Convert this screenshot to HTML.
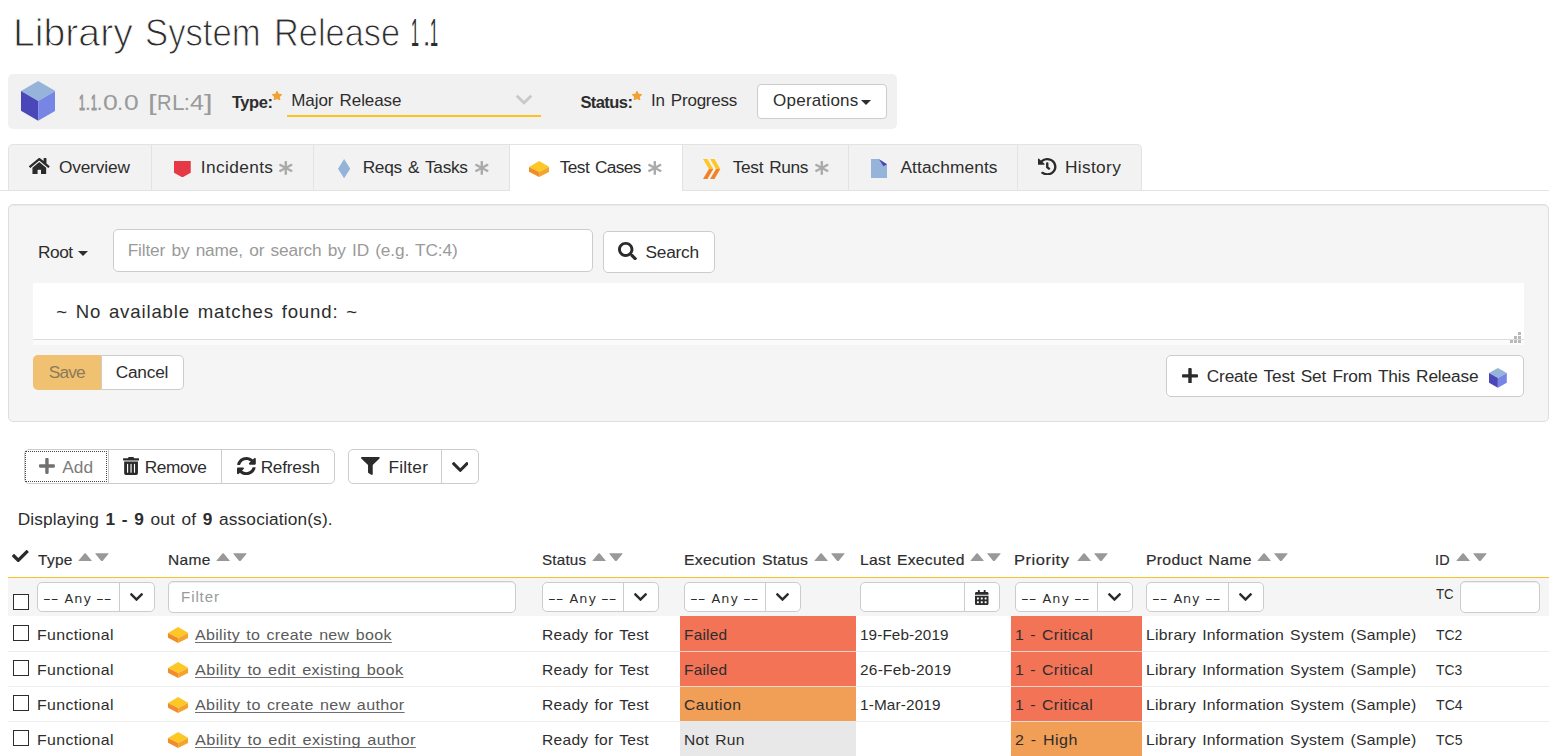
<!DOCTYPE html>
<html lang="en"><head><meta charset="utf-8"><title>Library System Release 1.1</title>
<style>
*{box-sizing:border-box}
html,body{margin:0;padding:0}
body{width:1561px;height:756px;overflow:hidden;background:#fff;font-family:"Liberation Sans",sans-serif;color:#2d2d2d;position:relative}
.bx,.ic,.tx{position:absolute;display:block}
.tx{white-space:pre;margin:0;padding:0;font-weight:normal;color:#2d2d2d;text-decoration:none}
.tx b{font-weight:bold}
.ttl{-webkit-text-stroke:1.0px #fff;color:#262626}
.t1{-webkit-text-stroke:0}
.v1{-webkit-text-stroke:1.2px #9a9a9a}
.ver{}
.dj{font-family:"DejaVu Sans","Liberation Sans",sans-serif}
.tg{position:absolute;display:block;margin:0;padding:0;font-size:0;white-space:nowrap;font-weight:normal}
.ti{display:inline-block;white-space:pre;vertical-align:baseline;color:#2d2d2d;overflow:visible}
</style></head>
<body>
<h1 class="tg" style="left:13.08px;top:9.46px;line-height:47px"><span class="ti ttl" style="width:132.19px;font-size:38.8px;line-height:47px;letter-spacing:0.000px;word-spacing:0px;transform:scaleX(1.0101);transform-origin:0 0;">Library</span> <span class="ti ttl" style="width:128.33px;font-size:38.8px;line-height:47px;letter-spacing:0.000px;word-spacing:0px;transform:scaleX(0.8943);transform-origin:0 0;">System</span> <span class="ti ttl" style="width:137.37px;font-size:38.8px;line-height:47px;letter-spacing:0.000px;word-spacing:0px;transform:scaleX(0.8856);transform-origin:0 0;">Release</span> <span class="ti ttl t1" style="width:10.23px;font-size:38.8px;line-height:47px;letter-spacing:0.000px;word-spacing:0px;transform:scaleX(0.3667);transform-origin:0 0;">1</span><span class="ti ttl" style="width:8.86px;font-size:38.8px;line-height:47px;letter-spacing:0.000px;word-spacing:3.49px;">.</span><span class="ti ttl t1" style="font-size:38.8px;line-height:47px;letter-spacing:0.000px;word-spacing:0px;transform:scaleX(0.3722);transform-origin:0 0;">1</span></h1>
<section class="release-header">
<div class="bx" style="left:8px;top:74px;width:889px;height:55px;background:#f1f1f1;border-radius:5px"></div><svg class="ic" style="left:20.9px;top:81px;width:34.4px;height:39.8px" viewBox="0 0 100 116" preserveAspectRatio="none"><polygon fill="#96b3d9" points="50,0 100,29 50,58 0,29"/><polygon fill="#4a48b8" points="0,29 50,58 50,116 0,87"/><polygon fill="#7786e4" points="100,29 50,58 50,116 100,87"/></svg><svg class="ic" style="left:271.9px;top:90.9px;width:10px;height:9.3px" viewBox="20.50 -0.01 535.00 512.06" preserveAspectRatio="none"><path fill="#f1a332" d="M259.300 17.800L194 150.200 47.900 171.500c-26.200 3.800-36.700 36.100-17.700 54.600l105.700 103-25 145.500c-4.500 26.300 23.200 46 46.400 33.700L288 439.600l130.700 68.700c23.200 12.200 50.900-7.400 46.400-33.700l-25-145.500 105.700-103c19-18.500 8.500-50.800-17.700-54.600L382 150.200 316.700 17.800c-11.700-23.600-45.600-23.900-57.400 0z"/></svg><div class="bx" style="left:287px;top:115px;width:254px;height:2px;background:#fbc31c"></div><svg class="ic" style="left:516px;top:95px;width:16px;height:9.5px" viewBox="5.66 123.49 436.69 265.01" preserveAspectRatio="none"><path fill="#c9c9c9" d="M207.029 381.476L12.686 187.132c-9.373-9.373-9.373-24.569 0-33.941l22.667-22.667c9.357-9.357 24.522-9.375 33.901-.040L224 284.505l154.745-154.021c9.379-9.335 24.544-9.317 33.901.040l22.667 22.667c9.373 9.373 9.373 24.569 0 33.941L240.971 381.476c-9.373 9.372-24.569 9.372-33.942 0z"/></svg><svg class="ic" style="left:631.9px;top:90.9px;width:10px;height:9.3px" viewBox="20.50 -0.01 535.00 512.06" preserveAspectRatio="none"><path fill="#f1a332" d="M259.300 17.800L194 150.200 47.900 171.500c-26.200 3.800-36.700 36.100-17.700 54.600l105.700 103-25 145.500c-4.500 26.300 23.200 46 46.400 33.700L288 439.600l130.700 68.700c23.200 12.200 50.900-7.400 46.400-33.700l-25-145.500 105.700-103c19-18.500 8.500-50.800-17.700-54.600L382 150.200 316.700 17.800c-11.700-23.600-45.600-23.900-57.400 0z"/></svg><div class="bx btn" style="left:757px;top:84px;width:130px;height:35px;background:#fff;border:1px solid #ccc;border-radius:4px"></div><div class="bx" style="left:861px;top:99.5px;width:0px;height:0px;border-left:5px solid transparent;border-right:5px solid transparent;border-top:5px solid #2d2d2d"></div>
<span class="tg version" style="left:78.62px;top:88.71px;line-height:27px"><span class="ti ver v1" style="width:6.18px;font-size:22.2px;line-height:27px;letter-spacing:0.000px;word-spacing:0px;transform:scaleX(0.4818);transform-origin:0 0;color:#9a9a9a">1</span><span class="ti ver" style="width:5.73px;font-size:22.2px;line-height:27px;letter-spacing:0.000px;word-spacing:2.0px;color:#9a9a9a">.</span><span class="ti ver v1" style="width:6.07px;font-size:22.2px;line-height:27px;letter-spacing:0.000px;word-spacing:0px;transform:scaleX(0.4727);transform-origin:0 0;color:#9a9a9a">1</span><span class="ti ver" style="width:6.30px;font-size:22.2px;line-height:27px;letter-spacing:0.000px;word-spacing:2.0px;color:#9a9a9a">.</span><span class="ti ver" style="width:14.10px;font-size:22.2px;line-height:27px;letter-spacing:0.000px;word-spacing:0px;transform:scaleX(1.2000);transform-origin:0 0;color:#9a9a9a">0</span><span class="ti ver" style="width:6.80px;font-size:22.2px;line-height:27px;letter-spacing:0.000px;word-spacing:2.0px;color:#9a9a9a">.</span><span class="ti ver" style="width:23.80px;font-size:22.2px;line-height:27px;letter-spacing:0.000px;word-spacing:0px;transform:scaleX(1.1917);transform-origin:0 0;color:#9a9a9a">0</span> <span class="ti ver" style="width:9.79px;font-size:22.2px;line-height:27px;letter-spacing:0.000px;word-spacing:0px;transform:scaleX(1.4000);transform-origin:0 0;color:#9a9a9a">[</span><span class="ti ver" style="width:14.99px;font-size:22.2px;line-height:27px;letter-spacing:0.000px;word-spacing:0px;transform:scaleX(0.9071);transform-origin:0 0;color:#9a9a9a">R</span><span class="ti ver" style="width:11.52px;font-size:22.2px;line-height:27px;letter-spacing:0.000px;word-spacing:0px;transform:scaleX(1.0182);transform-origin:0 0;color:#9a9a9a">L</span><span class="ti ver" style="width:5.80px;font-size:22.2px;line-height:27px;letter-spacing:0.000px;word-spacing:2.0px;color:#9a9a9a">:</span><span class="ti ver" style="width:14.20px;font-size:22.2px;line-height:27px;letter-spacing:0.000px;word-spacing:0px;transform:scaleX(1.1250);transform-origin:0 0;color:#9a9a9a">4</span><span class="ti ver" style="font-size:22.2px;line-height:27px;letter-spacing:0.000px;word-spacing:0px;transform:scaleX(1.4000);transform-origin:0 0;color:#9a9a9a">]</span></span>
<label class="tx" style="left:231.88px;top:91.78px;font-size:16.5px;line-height:20px;letter-spacing:-0.436px;word-spacing:1.48px;font-weight:bold">Type:</label>
<span class="tx" style="left:291.28px;top:90.61px;font-size:17px;line-height:20px;letter-spacing:-0.076px;word-spacing:1.53px;">Major Release</span>
<label class="tx" style="left:580.42px;top:91.78px;font-size:16.5px;line-height:20px;letter-spacing:-0.571px;word-spacing:1.48px;font-weight:bold">Status:</label>
<span class="tx" style="left:651.12px;top:91.11px;font-size:17px;line-height:20px;letter-spacing:-0.227px;word-spacing:1.53px;">In Progress</span>
<span class="tx" style="left:773.12px;top:91.11px;font-size:17px;line-height:20px;letter-spacing:0.225px;word-spacing:1.53px;">Operations</span>
</section>
<nav class="tabs">
<div class="bx" style="left:0px;top:190px;width:1549px;height:1px;background:#e3e3e3"></div><div class="bx" style="left:8px;top:144px;width:1134px;height:46px;background:#f2f2f2;border:1px solid #e3e3e3;border-bottom:none;border-radius:5px 5px 0 0"></div><div class="bx" style="left:151.2px;top:145px;width:1px;height:45px;background:#e3e3e3"></div><div class="bx" style="left:313.2px;top:145px;width:1px;height:45px;background:#e3e3e3"></div><div class="bx" style="left:848.3px;top:145px;width:1px;height:45px;background:#e3e3e3"></div><div class="bx" style="left:1017.2px;top:145px;width:1px;height:45px;background:#e3e3e3"></div><div class="bx" style="left:508.5px;top:144px;width:174.5px;height:47px;background:#fff;border:1px solid #e3e3e3;border-bottom:none"></div><svg class="ic" style="left:29.2px;top:157.8px;width:20.6px;height:16.4px" viewBox="-0.01 32.05 576.04 447.95" preserveAspectRatio="none"><path fill="#2b2b2b" d="M280.37 148.26L96 300.11V464a16 16 0 0 0 16 16l112.06-.29a16 16 0 0 0 15.92-16V368a16 16 0 0 1 16-16h64a16 16 0 0 1 16 16v95.64a16 16 0 0 0 16 16.05L464 480a16 16 0 0 0 16-16V300L295.67 148.26a12.19 12.19 0 0 0-15.3 0zM571.6 251.47L488 182.56V44.05a12 12 0 0 0-12-12h-56a12 12 0 0 0-12 12v72.61L318.47 43a48 48 0 0 0-61 0L4.34 251.47a12 12 0 0 0-1.6 16.9l25.5 31A12 12 0 0 0 45.15 301l235.22-193.74a12.19 12.19 0 0 1 15.3 0L530.9 301a12 12 0 0 0 16.9-1.6l25.5-31a12 12 0 0 0-1.7-16.93z"/></svg><svg class="ic" style="left:173.75px;top:160.7px;width:16.75px;height:16.4px" viewBox="0 0 16.75 16.4" preserveAspectRatio="none"><polygon fill="#e63946" points="0,0 16.75,0 16.75,11.8 8.4,16.4 0,11.8"/></svg><svg class="ic" style="left:279.2px;top:161px;width:13.6px;height:13.8px" viewBox="21.34 0.00 469.33 512.00" preserveAspectRatio="none"><path fill="#aaa" d="M478.210 334.093L336 256l142.210-78.093c11.795-6.477 15.961-21.384 9.232-33.037l-19.480-33.741c-6.728-11.653-21.720-15.499-33.227-8.523L296 186.718l3.475-162.204C299.763 11.061 288.937 0 275.480 0h-38.960c-13.456 0-24.283 11.061-23.994 24.514L216 186.718 77.265 102.607c-11.506-6.976-26.499-3.130-33.227 8.523l-19.480 33.741c-6.728 11.653-2.562 26.560 9.233 33.037L176 256 33.790 334.093c-11.795 6.477-15.961 21.384-9.232 33.037l19.480 33.741c6.728 11.653 21.721 15.499 33.227 8.523L216 325.282l-3.475 162.204C212.237 500.939 223.064 512 236.520 512h38.961c13.456 0 24.283-11.061 23.995-24.514L296 325.282l138.735 84.111c11.506 6.976 26.499 3.130 33.227-8.523l19.480-33.741c6.728-11.653 2.563-26.559-9.232-33.036z"/></svg><svg class="ic" style="left:338px;top:159.2px;width:12.2px;height:19.3px" viewBox="0 0 12.2 19.3" preserveAspectRatio="none"><polygon fill="#95b3d9" points="6.1,0 12.2,9.65 6.1,19.3 0,9.65"/></svg><svg class="ic" style="left:475px;top:161px;width:13.6px;height:13.8px" viewBox="21.34 0.00 469.33 512.00" preserveAspectRatio="none"><path fill="#aaa" d="M478.210 334.093L336 256l142.210-78.093c11.795-6.477 15.961-21.384 9.232-33.037l-19.480-33.741c-6.728-11.653-21.720-15.499-33.227-8.523L296 186.718l3.475-162.204C299.763 11.061 288.937 0 275.480 0h-38.960c-13.456 0-24.283 11.061-23.994 24.514L216 186.718 77.265 102.607c-11.506-6.976-26.499-3.130-33.227 8.523l-19.480 33.741c-6.728 11.653-2.562 26.560 9.233 33.037L176 256 33.790 334.093c-11.795 6.477-15.961 21.384-9.232 33.037l19.480 33.741c6.728 11.653 21.721 15.499 33.227 8.523L216 325.282l-3.475 162.204C212.237 500.939 223.064 512 236.520 512h38.961c13.456 0 24.283-11.061 23.995-24.514L296 325.282l138.735 84.111c11.506 6.976 26.499 3.130 33.227-8.523l19.480-33.741c6.728-11.653 2.563-26.559-9.232-33.036z"/></svg><svg class="ic" style="left:528.9px;top:161px;width:20.2px;height:16px" viewBox="0 0 20.2 16" preserveAspectRatio="none"><polygon fill="#fdc726" points="10.1,0 20.2,5.9 10.1,11 0,5.9"/><polygon fill="#f28c28" points="0,5.9 10.1,11 10.1,16 0,10.8"/><polygon fill="#f4a42a" points="20.2,5.9 10.1,11 10.1,16 20.2,10.8"/></svg><svg class="ic" style="left:648px;top:161px;width:13.6px;height:13.8px" viewBox="21.34 0.00 469.33 512.00" preserveAspectRatio="none"><path fill="#aaa" d="M478.210 334.093L336 256l142.210-78.093c11.795-6.477 15.961-21.384 9.232-33.037l-19.480-33.741c-6.728-11.653-21.720-15.499-33.227-8.523L296 186.718l3.475-162.204C299.763 11.061 288.937 0 275.480 0h-38.960c-13.456 0-24.283 11.061-23.994 24.514L216 186.718 77.265 102.607c-11.506-6.976-26.499-3.130-33.227 8.523l-19.480 33.741c-6.728 11.653-2.562 26.560 9.233 33.037L176 256 33.790 334.093c-11.795 6.477-15.961 21.384-9.232 33.037l19.480 33.741c6.728 11.653 21.721 15.499 33.227 8.523L216 325.282l-3.475 162.204C212.237 500.939 223.064 512 236.520 512h38.961c13.456 0 24.283-11.061 23.995-24.514L296 325.282l138.735 84.111c11.506 6.976 26.499 3.130 33.227-8.523l19.480-33.741c6.728-11.653 2.563-26.559-9.232-33.036z"/></svg><svg class="ic" style="left:703.4px;top:158.9px;width:17.3px;height:19.9px" viewBox="0 0 17.3 19.9" preserveAspectRatio="none"><polygon fill="#fdc726" points="0,0 4.4,0 10.3,10.1 5.9,10.1"/><polygon fill="#fdc726" points="7.1,0 11.5,0 17.3,10.1 13,10.1"/><polygon fill="#f28228" points="5.9,9.9 10.3,9.9 4.4,19.9 0,19.9"/><polygon fill="#f28228" points="13,9.9 17.3,9.9 11.5,19.9 7.1,19.9"/></svg><svg class="ic" style="left:815px;top:161px;width:13.6px;height:13.8px" viewBox="21.34 0.00 469.33 512.00" preserveAspectRatio="none"><path fill="#aaa" d="M478.210 334.093L336 256l142.210-78.093c11.795-6.477 15.961-21.384 9.232-33.037l-19.480-33.741c-6.728-11.653-21.720-15.499-33.227-8.523L296 186.718l3.475-162.204C299.763 11.061 288.937 0 275.480 0h-38.960c-13.456 0-24.283 11.061-23.994 24.514L216 186.718 77.265 102.607c-11.506-6.976-26.499-3.130-33.227 8.523l-19.480 33.741c-6.728 11.653-2.562 26.560 9.233 33.037L176 256 33.790 334.093c-11.795 6.477-15.961 21.384-9.232 33.037l19.480 33.741c6.728 11.653 21.721 15.499 33.227 8.523L216 325.282l-3.475 162.204C212.237 500.939 223.064 512 236.520 512h38.961c13.456 0 24.283-11.061 23.995-24.514L296 325.282l138.735 84.111c11.506 6.976 26.499 3.130 33.227-8.523l19.480-33.741c6.728-11.653 2.563-26.559-9.232-33.036z"/></svg><svg class="ic" style="left:871px;top:159.2px;width:16.1px;height:19.2px" viewBox="0 0 16.1 19.2" preserveAspectRatio="none"><polygon fill="#96b3d9" points="0,0 8,0 16.1,5.2 16.1,19.2 0,19.2"/><polygon fill="#4845b8" points="8,0.3 16.1,5.2 12.4,7.2"/></svg><svg class="ic" style="left:1038.25px;top:157.5px;width:18.5px;height:17.5px" viewBox="8.00 8.00 496.00 496.00" preserveAspectRatio="none"><path fill="#2b2b2b" d="M504 255.531c.253 136.64-111.18 248.372-247.82 248.468-59.015.042-113.223-20.53-155.822-54.911-11.077-8.94-11.905-25.541-1.839-35.607l11.267-11.267c8.609-8.609 22.353-9.551 31.891-1.984C173.062 425.135 212.781 440 256 440c101.705 0 184-82.311 184-184 0-101.705-82.311-184-184-184-48.814 0-93.149 18.969-126.068 49.932l50.754 50.754c10.08 10.08 2.941 27.314-11.313 27.314H24c-8.837 0-16-7.163-16-16V38.627c0-14.254 17.234-21.393 27.314-11.314l49.372 49.372C129.209 34.136 189.552 8 256 8c136.81 0 247.747 110.78 248 247.531zm-180.912 78.784l9.823-12.63c8.138-10.463 6.253-25.542-4.21-33.679L288 256.349V152c0-13.255-10.745-24-24-24h-16c-13.255 0-24 10.745-24 24v135.651l65.409 50.874c10.463 8.137 25.541 6.253 33.679-4.21z"/></svg>
<span class="tx" style="left:58.89px;top:156.51px;font-size:17.3px;line-height:21px;letter-spacing:-0.148px;word-spacing:1.56px;">Overview</span>
<span class="tx" style="left:200.69px;top:156.51px;font-size:17.3px;line-height:21px;letter-spacing:0.388px;word-spacing:1.56px;">Incidents</span>
<span class="tx" style="left:362.64px;top:156.51px;font-size:17.3px;line-height:21px;letter-spacing:-0.279px;word-spacing:1.56px;">Reqs &amp; Tasks</span>
<span class="tx" style="left:559.80px;top:156.51px;font-size:17.3px;line-height:21px;letter-spacing:-0.595px;word-spacing:1.56px;">Test Cases</span>
<span class="tx" style="left:732.80px;top:156.51px;font-size:17.3px;line-height:21px;letter-spacing:-0.340px;word-spacing:1.56px;">Test Runs</span>
<span class="tx" style="left:900.47px;top:156.51px;font-size:17.3px;line-height:21px;letter-spacing:0.096px;word-spacing:1.56px;">Attachments</span>
<span class="tx" style="left:1065.07px;top:156.51px;font-size:17.3px;line-height:21px;letter-spacing:0.323px;word-spacing:1.56px;">History</span>
</nav>
<section class="assoc-panel">
<div class="bx" style="left:8px;top:204px;width:1541px;height:218px;background:#f5f5f5;border:1px solid #dedede;border-radius:5px;box-shadow:inset 0 1px 1px rgba(0,0,0,.05)"></div><div class="bx" style="left:77.5px;top:250.5px;width:0px;height:0px;border-left:5px solid transparent;border-right:5px solid transparent;border-top:5px solid #2d2d2d"></div><div class="bx" style="left:113px;top:229px;width:480px;height:43px;background:#fff;border:1px solid #ccc;border-radius:5px"></div><div class="bx btn" style="left:603px;top:231px;width:111.8px;height:41.5px;background:#fff;border:1px solid #ccc;border-radius:5px"></div><svg class="ic" style="left:618.1px;top:241.8px;width:19px;height:18.4px" viewBox="0.00 0.00 511.96 512.05" preserveAspectRatio="none"><path fill="#2b2b2b" d="M505 442.7L405.3 343c-4.5-4.5-10.6-7-17-7H372c27.6-35.3 44-79.700 44-128C416 93.100 322.900 0 208 0S0 93.100 0 208s93.100 208 208 208c48.300 0 92.700-16.400 128-44v16.300c0 6.400 2.500 12.500 7 17l99.700 99.700c9.400 9.400 24.600 9.400 33.900 0l28.300-28.300c9.400-9.400 9.400-24.600.1-34zM208 336c-70.700 0-128-57.200-128-128 0-70.700 57.200-128 128-128 70.700 0 128 57.200 128 128 0 70.700-57.200 128-128 128z"/></svg><div class="bx" style="left:33px;top:283px;width:1491px;height:62px;background:#fff"></div><div class="bx" style="left:33px;top:339px;width:1491px;height:1px;background:#dcdcdc"></div><div class="bx" style="left:33px;top:340px;width:1491px;height:5px;background:#fbfbfb"></div><svg class="ic" style="left:1510.2px;top:332.2px;width:11px;height:11px" viewBox="0 0 11 11"><rect x="8" y="0" width="3" height="3" fill="#b9b9b9"/><rect x="4" y="4" width="3" height="3" fill="#b9b9b9"/><rect x="8" y="4" width="3" height="3" fill="#b9b9b9"/><rect x="0" y="8" width="3" height="3" fill="#b9b9b9"/><rect x="4" y="8" width="3" height="3" fill="#b9b9b9"/><rect x="8" y="8" width="3" height="3" fill="#b9b9b9"/></svg><div class="bx" style="left:33px;top:355px;width:68px;height:35px;background:#f0c170;border-radius:5px 0 0 5px"></div><div class="bx btn" style="left:100.5px;top:355px;width:83.5px;height:35px;background:#fff;border:1px solid #ccc;border-radius:0 5px 5px 0"></div><div class="bx btn" style="left:1166px;top:355px;width:358px;height:41.5px;background:#fff;border:1px solid #ccc;border-radius:5px"></div><svg class="ic" style="left:1182px;top:367.5px;width:16px;height:15.8px" viewBox="0.00 32.00 448.00 448.00" preserveAspectRatio="none"><path fill="#2b2b2b" d="M416 208H272V64c0-17.670-14.330-32-32-32h-32c-17.670 0-32 14.330-32 32v144H32c-17.670 0-32 14.330-32 32v32c0 17.670 14.330 32 32 32h144v144c0 17.670 14.330 32 32 32h32c17.670 0 32-14.330 32-32V304h144c17.670 0 32-14.330 32-32v-32c0-17.670-14.330-32-32-32z"/></svg><svg class="ic" style="left:1489.1px;top:368px;width:17.8px;height:19.8px" viewBox="0 0 100 116" preserveAspectRatio="none"><polygon fill="#96b3d9" points="50,0 100,29 50,58 0,29"/><polygon fill="#4a48b8" points="0,29 50,58 50,116 0,87"/><polygon fill="#7786e4" points="100,29 50,58 50,116 100,87"/></svg>
<span class="tx" style="left:38.07px;top:241.51px;font-size:17.3px;line-height:21px;letter-spacing:-0.505px;word-spacing:1.56px;">Root</span>
<span class="tx" style="left:127.64px;top:239.76px;font-size:17.3px;line-height:21px;letter-spacing:-0.136px;word-spacing:1.56px;color:#9a9a9a">Filter by name, or search by ID (e.g. TC:4)</span>
<span class="tx" style="left:645.49px;top:241.51px;font-size:17.3px;line-height:21px;letter-spacing:-0.219px;word-spacing:1.56px;">Search</span>
<span class="tx" style="left:56.33px;top:300.56px;font-size:18.6px;line-height:22px;letter-spacing:0.856px;word-spacing:1.67px;">~ No available matches found: ~</span>
<span class="tx" style="left:48.83px;top:361.51px;font-size:17.3px;line-height:21px;letter-spacing:-0.853px;word-spacing:1.56px;color:#8d7a58">Save</span>
<span class="tx" style="left:115.75px;top:361.51px;font-size:17.3px;line-height:21px;letter-spacing:-0.234px;word-spacing:1.56px;">Cancel</span>
<span class="tx" style="left:1206.76px;top:365.91px;font-size:17.3px;line-height:21px;letter-spacing:-0.165px;word-spacing:1.56px;">Create Test Set From This Release</span>
</section>
<section class="toolbar">
<div class="bx btn" style="left:23.75px;top:449.25px;width:311px;height:34.5px;background:#fff;border:1px solid #ccc;border-radius:5px"></div><div class="bx" style="left:24.6px;top:450.6px;width:82.6px;height:31.4px;border:1px dotted #444;border-radius:1px"></div><div class="bx" style="left:108px;top:450px;width:1px;height:33px;background:#ccc"></div><div class="bx" style="left:221.25px;top:450px;width:1px;height:33px;background:#ccc"></div><svg class="ic" style="left:39.1px;top:458.2px;width:15.9px;height:15.9px" viewBox="0.00 32.00 448.00 448.00" preserveAspectRatio="none"><path fill="#707070" d="M416 208H272V64c0-17.670-14.330-32-32-32h-32c-17.670 0-32 14.330-32 32v144H32c-17.670 0-32 14.330-32 32v32c0 17.670 14.330 32 32 32h144v144c0 17.670 14.330 32 32 32h32c17.670 0 32-14.330 32-32V304h144c17.670 0 32-14.330 32-32v-32c0-17.670-14.330-32-32-32z"/></svg><svg class="ic" style="left:123px;top:457px;width:16.1px;height:18px" viewBox="0.00 -0.00 448.00 512.00" preserveAspectRatio="none"><path fill="#2b2b2b" d="M32 464a48 48 0 0 0 48 48h288a48 48 0 0 0 48-48V128H32zm272-256a16 16 0 0 1 32 0v224a16 16 0 0 1-32 0zm-96 0a16 16 0 0 1 32 0v224a16 16 0 0 1-32 0zm-96 0a16 16 0 0 1 32 0v224a16 16 0 0 1-32 0zM432 32H312l-9.400-18.700A24 24 0 0 0 281.100 0H166.800a23.720 23.720 0 0 0-21.400 13.300L136 32H16A16 16 0 0 0 0 48v32a16 16 0 0 0 16 16h416a16 16 0 0 0 16-16V48a16 16 0 0 0-16-16z"/></svg><svg class="ic" style="left:237px;top:457px;width:18.8px;height:18.2px" viewBox="8.00 8.00 496.00 496.00" preserveAspectRatio="none"><path fill="#2b2b2b" d="M370.72 133.28C339.458 104.008 298.888 87.962 255.848 88c-77.458.068-144.328 53.178-162.791 126.850-1.344 5.363-6.122 9.150-11.651 9.150H24.103c-7.498 0-13.194-6.807-11.807-14.176C33.933 94.924 134.813 8 256 8c66.448 0 126.791 26.136 171.315 68.685L463.030 40.970C478.149 25.851 504 36.559 504 57.941V192c0 13.255-10.745 24-24 24H345.941c-21.382 0-32.090-25.851-16.971-40.971l41.750-41.749zM32 296h134.059c21.382 0 32.090 25.851 16.971 40.971l-41.750 41.750c31.262 29.273 71.835 45.319 114.876 45.280 77.418-.070 144.315-53.144 162.787-126.849 1.344-5.363 6.122-9.150 11.651-9.150h57.304c7.498 0 13.194 6.807 11.807 14.176C478.067 417.076 377.187 504 256 504c-66.448 0-126.791-26.136-171.315-68.685L48.970 471.030C33.851 486.149 8 475.441 8 454.059V320c0-13.255 10.745-24 24-24z"/></svg><div class="bx btn" style="left:348.25px;top:449.25px;width:130.5px;height:34.5px;background:#fff;border:1px solid #ccc;border-radius:5px"></div><div class="bx" style="left:441.25px;top:450px;width:1px;height:33px;background:#ccc"></div><svg class="ic" style="left:361.25px;top:457px;width:18.75px;height:18px" viewBox="0.00 0.00 512.00 512.00" preserveAspectRatio="none"><path fill="#2b2b2b" d="M487.976 0H24.028C2.710 0-8.047 25.866 7.058 40.971L192 225.941V432c0 7.831 3.821 15.170 10.237 19.662l80 55.980C298.020 518.690 320 507.493 320 487.980V225.941l184.947-184.970C520.021 25.896 509.338 0 487.976 0z"/></svg><svg class="ic" style="left:451.7px;top:462px;width:16.6px;height:10.1px" viewBox="5.66 123.49 436.69 265.01" preserveAspectRatio="none"><path fill="#2b2b2b" d="M207.029 381.476L12.686 187.132c-9.373-9.373-9.373-24.569 0-33.941l22.667-22.667c9.357-9.357 24.522-9.375 33.901-.040L224 284.505l154.745-154.021c9.379-9.335 24.544-9.317 33.901.040l22.667 22.667c9.373 9.373 9.373 24.569 0 33.941L240.971 381.476c-9.373 9.372-24.569 9.372-33.942 0z"/></svg>
<span class="tx" style="left:62.33px;top:456.51px;font-size:17.3px;line-height:21px;letter-spacing:-0.042px;word-spacing:1.56px;color:#7c7c7c">Add</span>
<span class="tx" style="left:144.64px;top:456.51px;font-size:17.3px;line-height:21px;letter-spacing:-0.404px;word-spacing:1.56px;">Remove</span>
<span class="tx" style="left:260.64px;top:456.51px;font-size:17.3px;line-height:21px;letter-spacing:-0.230px;word-spacing:1.56px;">Refresh</span>
<span class="tx" style="left:388.40px;top:456.51px;font-size:17.3px;line-height:21px;letter-spacing:0.233px;word-spacing:1.56px;">Filter</span>
<span class="tx" style="left:17.64px;top:508.51px;font-size:17.3px;line-height:21px;letter-spacing:0.156px;word-spacing:1.56px;">Displaying <b>1 - 9</b> out of <b>9</b> association(s).</span>
</section>
<section class="grid">
<svg class="ic" style="left:12.2px;top:549.8px;width:16.7px;height:12.3px" viewBox="0.00 65.10 512.00 381.80" preserveAspectRatio="none"><path fill="#2b2b2b" d="M173.898 439.404l-166.400-166.400c-9.997-9.997-9.997-26.206 0-36.204l36.203-36.204c9.997-9.998 26.207-9.998 36.204 0L192 312.690 432.095 72.596c9.997-9.997 26.207-9.997 36.204 0l36.203 36.204c9.997 9.997 9.997 26.206 0 36.204l-294.400 294.401c-9.998 9.997-26.207 9.997-36.204-.001z"/></svg><svg class="ic" style="left:78.0px;top:552.7px;width:31px;height:8.5px" viewBox="0 0 31 8.5"><path fill="#999" d="M0.9 8.2 Q0 8.2 0.6 7.4 L6.4 0.6 Q7.1 -0.1 7.8 0.6 L13.6 7.4 Q14.2 8.2 13.3 8.2 Z"/><path fill="#999" d="M17.8 0.2 Q16.9 0.2 17.5 1 L23.2 7.9 Q23.9 8.6 24.6 7.9 L30.4 1 Q31 0.2 30.1 0.2 Z"/></svg><svg class="ic" style="left:216.25px;top:552.7px;width:31px;height:8.5px" viewBox="0 0 31 8.5"><path fill="#999" d="M0.9 8.2 Q0 8.2 0.6 7.4 L6.4 0.6 Q7.1 -0.1 7.8 0.6 L13.6 7.4 Q14.2 8.2 13.3 8.2 Z"/><path fill="#999" d="M17.8 0.2 Q16.9 0.2 17.5 1 L23.2 7.9 Q23.9 8.6 24.6 7.9 L30.4 1 Q31 0.2 30.1 0.2 Z"/></svg><svg class="ic" style="left:592.25px;top:552.7px;width:31px;height:8.5px" viewBox="0 0 31 8.5"><path fill="#999" d="M0.9 8.2 Q0 8.2 0.6 7.4 L6.4 0.6 Q7.1 -0.1 7.8 0.6 L13.6 7.4 Q14.2 8.2 13.3 8.2 Z"/><path fill="#999" d="M17.8 0.2 Q16.9 0.2 17.5 1 L23.2 7.9 Q23.9 8.6 24.6 7.9 L30.4 1 Q31 0.2 30.1 0.2 Z"/></svg><svg class="ic" style="left:813.75px;top:552.7px;width:31px;height:8.5px" viewBox="0 0 31 8.5"><path fill="#999" d="M0.9 8.2 Q0 8.2 0.6 7.4 L6.4 0.6 Q7.1 -0.1 7.8 0.6 L13.6 7.4 Q14.2 8.2 13.3 8.2 Z"/><path fill="#999" d="M17.8 0.2 Q16.9 0.2 17.5 1 L23.2 7.9 Q23.9 8.6 24.6 7.9 L30.4 1 Q31 0.2 30.1 0.2 Z"/></svg><svg class="ic" style="left:969.75px;top:552.7px;width:31px;height:8.5px" viewBox="0 0 31 8.5"><path fill="#999" d="M0.9 8.2 Q0 8.2 0.6 7.4 L6.4 0.6 Q7.1 -0.1 7.8 0.6 L13.6 7.4 Q14.2 8.2 13.3 8.2 Z"/><path fill="#999" d="M17.8 0.2 Q16.9 0.2 17.5 1 L23.2 7.9 Q23.9 8.6 24.6 7.9 L30.4 1 Q31 0.2 30.1 0.2 Z"/></svg><svg class="ic" style="left:1077.25px;top:552.7px;width:31px;height:8.5px" viewBox="0 0 31 8.5"><path fill="#999" d="M0.9 8.2 Q0 8.2 0.6 7.4 L6.4 0.6 Q7.1 -0.1 7.8 0.6 L13.6 7.4 Q14.2 8.2 13.3 8.2 Z"/><path fill="#999" d="M17.8 0.2 Q16.9 0.2 17.5 1 L23.2 7.9 Q23.9 8.6 24.6 7.9 L30.4 1 Q31 0.2 30.1 0.2 Z"/></svg><svg class="ic" style="left:1256.75px;top:552.7px;width:31px;height:8.5px" viewBox="0 0 31 8.5"><path fill="#999" d="M0.9 8.2 Q0 8.2 0.6 7.4 L6.4 0.6 Q7.1 -0.1 7.8 0.6 L13.6 7.4 Q14.2 8.2 13.3 8.2 Z"/><path fill="#999" d="M17.8 0.2 Q16.9 0.2 17.5 1 L23.2 7.9 Q23.9 8.6 24.6 7.9 L30.4 1 Q31 0.2 30.1 0.2 Z"/></svg><svg class="ic" style="left:1455.95px;top:552.7px;width:31px;height:8.5px" viewBox="0 0 31 8.5"><path fill="#999" d="M0.9 8.2 Q0 8.2 0.6 7.4 L6.4 0.6 Q7.1 -0.1 7.8 0.6 L13.6 7.4 Q14.2 8.2 13.3 8.2 Z"/><path fill="#999" d="M17.8 0.2 Q16.9 0.2 17.5 1 L23.2 7.9 Q23.9 8.6 24.6 7.9 L30.4 1 Q31 0.2 30.1 0.2 Z"/></svg><div class="bx" style="left:8px;top:576.8px;width:1541px;height:1.1px;background:#f9c224"></div><div class="bx" style="left:8px;top:577.9px;width:1541px;height:37.9px;background:#f5f5f5"></div><div class="bx cb" style="left:13px;top:594px;width:16px;height:16px;background:#fff;border:1.25px solid #2d2d2d"></div><div class="bx sel" style="left:37.0px;top:582px;width:117.5px;height:30px;background:#fff;border:1px solid #ccc;border-radius:5px"></div><div class="bx" style="left:119px;top:583px;width:1px;height:28px;background:#ccc"></div><svg class="ic" style="left:130.0px;top:593.2px;width:13px;height:8px" viewBox="5.66 123.49 436.69 265.01" preserveAspectRatio="none"><path fill="#2b2b2b" d="M207.029 381.476L12.686 187.132c-9.373-9.373-9.373-24.569 0-33.941l22.667-22.667c9.357-9.357 24.522-9.375 33.901-.040L224 284.505l154.745-154.021c9.379-9.335 24.544-9.317 33.901.040l22.667 22.667c9.373 9.373 9.373 24.569 0 33.941L240.971 381.476c-9.373 9.372-24.569 9.372-33.942 0z"/></svg><div class="bx" style="left:168.25px;top:581.25px;width:347.5px;height:31.25px;background:#fff;border:1px solid #ccc;border-radius:5px;box-shadow:inset 0 1px 1px rgba(0,0,0,.075)"></div><div class="bx sel" style="left:542.0px;top:582px;width:116.75px;height:30px;background:#fff;border:1px solid #ccc;border-radius:5px"></div><div class="bx" style="left:623px;top:583px;width:1px;height:28px;background:#ccc"></div><svg class="ic" style="left:634.25px;top:593.2px;width:13px;height:8px" viewBox="5.66 123.49 436.69 265.01" preserveAspectRatio="none"><path fill="#2b2b2b" d="M207.029 381.476L12.686 187.132c-9.373-9.373-9.373-24.569 0-33.941l22.667-22.667c9.357-9.357 24.522-9.375 33.901-.040L224 284.505l154.745-154.021c9.379-9.335 24.544-9.317 33.901.040l22.667 22.667c9.373 9.373 9.373 24.569 0 33.941L240.971 381.476c-9.373 9.372-24.569 9.372-33.942 0z"/></svg><div class="bx sel" style="left:684.0px;top:582px;width:116.75px;height:30px;background:#fff;border:1px solid #ccc;border-radius:5px"></div><div class="bx" style="left:765px;top:583px;width:1px;height:28px;background:#ccc"></div><svg class="ic" style="left:775.75px;top:593.2px;width:13px;height:8px" viewBox="5.66 123.49 436.69 265.01" preserveAspectRatio="none"><path fill="#2b2b2b" d="M207.029 381.476L12.686 187.132c-9.373-9.373-9.373-24.569 0-33.941l22.667-22.667c9.357-9.357 24.522-9.375 33.901-.040L224 284.505l154.745-154.021c9.379-9.335 24.544-9.317 33.901.040l22.667 22.667c9.373 9.373 9.373 24.569 0 33.941L240.971 381.476c-9.373 9.372-24.569 9.372-33.942 0z"/></svg><div class="bx" style="left:860px;top:582px;width:140px;height:30px;background:#fff;border:1px solid #ccc;border-radius:5px"></div><div class="bx" style="left:964px;top:583px;width:1px;height:28px;background:#ccc"></div><svg class="ic" style="left:975px;top:589.8px;width:13.5px;height:15.1px" viewBox="0.00 0.00 448.00 512.00" preserveAspectRatio="none"><path fill="#2b2b2b" d="M0 464c0 26.500 21.500 48 48 48h352c26.500 0 48-21.500 48-48V192H0v272zm320-196c0-6.600 5.400-12 12-12h40c6.600 0 12 5.400 12 12v40c0 6.600-5.400 12-12 12h-40c-6.600 0-12-5.400-12-12v-40zm0 128c0-6.600 5.400-12 12-12h40c6.600 0 12 5.400 12 12v40c0 6.600-5.400 12-12 12h-40c-6.600 0-12-5.400-12-12v-40zM192 268c0-6.600 5.400-12 12-12h40c6.600 0 12 5.400 12 12v40c0 6.600-5.400 12-12 12h-40c-6.600 0-12-5.400-12-12v-40zm0 128c0-6.600 5.400-12 12-12h40c6.600 0 12 5.400 12 12v40c0 6.600-5.400 12-12 12h-40c-6.600 0-12-5.400-12-12v-40zM64 268c0-6.600 5.400-12 12-12h40c6.600 0 12 5.400 12 12v40c0 6.600-5.400 12-12 12H76c-6.600 0-12-5.400-12-12v-40zm0 128c0-6.600 5.400-12 12-12h40c6.600 0 12 5.400 12 12v40c0 6.600-5.400 12-12 12H76c-6.600 0-12-5.400-12-12v-40zM400 64h-48V16c0-8.800-7.200-16-16-16h-32c-8.800 0-16 7.200-16 16v48H160V16c0-8.800-7.200-16-16-16h-32c-8.800 0-16 7.200-16 16v48H48C21.500 64 0 85.500 0 112v48h448v-48c0-26.500-21.500-48-48-48z"/></svg><div class="bx sel" style="left:1015.0px;top:582px;width:117.5px;height:30px;background:#fff;border:1px solid #ccc;border-radius:5px"></div><div class="bx" style="left:1097px;top:583px;width:1px;height:28px;background:#ccc"></div><svg class="ic" style="left:1108.0px;top:593.2px;width:13px;height:8px" viewBox="5.66 123.49 436.69 265.01" preserveAspectRatio="none"><path fill="#2b2b2b" d="M207.029 381.476L12.686 187.132c-9.373-9.373-9.373-24.569 0-33.941l22.667-22.667c9.357-9.357 24.522-9.375 33.901-.040L224 284.505l154.745-154.021c9.379-9.335 24.544-9.317 33.901.040l22.667 22.667c9.373 9.373 9.373 24.569 0 33.941L240.971 381.476c-9.373 9.372-24.569 9.372-33.942 0z"/></svg><div class="bx sel" style="left:1145.75px;top:582px;width:118.0px;height:30px;background:#fff;border:1px solid #ccc;border-radius:5px"></div><div class="bx" style="left:1228px;top:583px;width:1px;height:28px;background:#ccc"></div><svg class="ic" style="left:1239.25px;top:593.2px;width:13px;height:8px" viewBox="5.66 123.49 436.69 265.01" preserveAspectRatio="none"><path fill="#2b2b2b" d="M207.029 381.476L12.686 187.132c-9.373-9.373-9.373-24.569 0-33.941l22.667-22.667c9.357-9.357 24.522-9.375 33.901-.040L224 284.505l154.745-154.021c9.379-9.335 24.544-9.317 33.901.040l22.667 22.667c9.373 9.373 9.373 24.569 0 33.941L240.971 381.476c-9.373 9.372-24.569 9.372-33.942 0z"/></svg><div class="bx" style="left:1460px;top:581px;width:80px;height:31.5px;background:#fff;border:1px solid #ccc;border-radius:5px;box-shadow:inset 0 1px 1px rgba(0,0,0,.075)"></div><div class="bx" style="left:680px;top:615.8px;width:176.25px;height:35.4px;background:#f37356"></div><div class="bx" style="left:1011.25px;top:615.8px;width:130.75px;height:35.4px;background:#f37356"></div><div class="bx cb" style="left:13px;top:625px;width:16px;height:16px;background:#fff;border:1.25px solid #2d2d2d"></div><svg class="ic" style="left:168px;top:627px;width:20.2px;height:16px" viewBox="0 0 20.2 16" preserveAspectRatio="none"><polygon fill="#fdc726" points="10.1,0 20.2,5.9 10.1,11 0,5.9"/><polygon fill="#f28c28" points="0,5.9 10.1,11 10.1,16 0,10.8"/><polygon fill="#f4a42a" points="20.2,5.9 10.1,11 10.1,16 20.2,10.8"/></svg><div class="bx" style="left:680px;top:650.8px;width:176.25px;height:35.4px;background:#f37356"></div><div class="bx" style="left:1011.25px;top:650.8px;width:130.75px;height:35.4px;background:#f37356"></div><div class="bx" style="left:8px;top:650.8px;width:1541px;height:1px;background:rgba(255,255,255,.55)"></div><div class="bx" style="left:8px;top:650.8px;width:1541px;height:1px;background:rgba(225,225,225,.6)"></div><div class="bx cb" style="left:13px;top:660px;width:16px;height:16px;background:#fff;border:1.25px solid #2d2d2d"></div><svg class="ic" style="left:168px;top:662px;width:20.2px;height:16px" viewBox="0 0 20.2 16" preserveAspectRatio="none"><polygon fill="#fdc726" points="10.1,0 20.2,5.9 10.1,11 0,5.9"/><polygon fill="#f28c28" points="0,5.9 10.1,11 10.1,16 0,10.8"/><polygon fill="#f4a42a" points="20.2,5.9 10.1,11 10.1,16 20.2,10.8"/></svg><div class="bx" style="left:680px;top:685.8px;width:176.25px;height:35.4px;background:#f19e56"></div><div class="bx" style="left:1011.25px;top:685.8px;width:130.75px;height:35.4px;background:#f37356"></div><div class="bx" style="left:8px;top:685.8px;width:1541px;height:1px;background:rgba(255,255,255,.55)"></div><div class="bx" style="left:8px;top:685.8px;width:1541px;height:1px;background:rgba(225,225,225,.6)"></div><div class="bx cb" style="left:13px;top:695px;width:16px;height:16px;background:#fff;border:1.25px solid #2d2d2d"></div><svg class="ic" style="left:168px;top:697px;width:20.2px;height:16px" viewBox="0 0 20.2 16" preserveAspectRatio="none"><polygon fill="#fdc726" points="10.1,0 20.2,5.9 10.1,11 0,5.9"/><polygon fill="#f28c28" points="0,5.9 10.1,11 10.1,16 0,10.8"/><polygon fill="#f4a42a" points="20.2,5.9 10.1,11 10.1,16 20.2,10.8"/></svg><div class="bx" style="left:680px;top:720.8px;width:176.25px;height:35.4px;background:#e8e8e8"></div><div class="bx" style="left:1011.25px;top:720.8px;width:130.75px;height:35.4px;background:#f19e56"></div><div class="bx" style="left:8px;top:720.8px;width:1541px;height:1px;background:rgba(255,255,255,.55)"></div><div class="bx" style="left:8px;top:720.8px;width:1541px;height:1px;background:rgba(225,225,225,.6)"></div><div class="bx cb" style="left:13px;top:730px;width:16px;height:16px;background:#fff;border:1.25px solid #2d2d2d"></div><svg class="ic" style="left:168px;top:732px;width:20.2px;height:16px" viewBox="0 0 20.2 16" preserveAspectRatio="none"><polygon fill="#fdc726" points="10.1,0 20.2,5.9 10.1,11 0,5.9"/><polygon fill="#f28c28" points="0,5.9 10.1,11 10.1,16 0,10.8"/><polygon fill="#f4a42a" points="20.2,5.9 10.1,11 10.1,16 20.2,10.8"/></svg>
<span class="tx th" style="left:37.56px;top:550.80px;font-size:15px;line-height:18px;letter-spacing:0.315px;word-spacing:1.35px;transform:scaleX(1.0293);transform-origin:0 0;-webkit-text-stroke:0.18px #2d2d2d">Type</span>
<span class="tx th" style="left:167.74px;top:550.80px;font-size:15px;line-height:18px;letter-spacing:0.302px;word-spacing:1.35px;transform:scaleX(1.0323);transform-origin:0 0;-webkit-text-stroke:0.18px #2d2d2d">Name</span>
<span class="tx th" style="left:542.04px;top:550.80px;font-size:15px;line-height:18px;letter-spacing:0.189px;word-spacing:1.35px;transform:scaleX(1.0139);transform-origin:0 0;-webkit-text-stroke:0.18px #2d2d2d">Status</span>
<span class="tx th" style="left:683.61px;top:550.80px;font-size:15px;line-height:18px;letter-spacing:0.252px;word-spacing:1.35px;transform:scaleX(1.0538);transform-origin:0 0;-webkit-text-stroke:0.18px #2d2d2d">Execution Status</span>
<span class="tx th" style="left:859.63px;top:550.80px;font-size:15px;line-height:18px;letter-spacing:0.275px;word-spacing:1.35px;transform:scaleX(1.0469);transform-origin:0 0;-webkit-text-stroke:0.18px #2d2d2d">Last Executed</span>
<span class="tx th" style="left:1014.46px;top:550.80px;font-size:15px;line-height:18px;letter-spacing:0.451px;word-spacing:1.35px;transform:scaleX(1.1018);transform-origin:0 0;-webkit-text-stroke:0.18px #2d2d2d">Priority</span>
<span class="tx th" style="left:1145.60px;top:550.80px;font-size:15px;line-height:18px;letter-spacing:0.295px;word-spacing:1.35px;transform:scaleX(1.0492);transform-origin:0 0;-webkit-text-stroke:0.18px #2d2d2d">Product Name</span>
<span class="tx th" style="left:1435.42px;top:550.80px;font-size:15px;line-height:18px;letter-spacing:0.373px;word-spacing:1.35px;transform:scaleX(0.9590);transform-origin:0 0;-webkit-text-stroke:0.18px #2d2d2d">ID</span>
<span class="tg anysel" style="left:42.87px;top:591.21px;line-height:15px"><span class="ti dj" style="width:21.71px;font-size:12.4px;line-height:15px;letter-spacing:0.000px;word-spacing:0px;transform:scaleX(1.7390);transform-origin:0 0;">--</span> <span class="ti dj" style="width:31.45px;font-size:12.8px;line-height:15px;letter-spacing:1.018px;word-spacing:1.15px;">Any</span> <span class="ti dj" style="font-size:12.4px;line-height:15px;letter-spacing:0.000px;word-spacing:0px;transform:scaleX(1.7390);transform-origin:0 0;">--</span></span>
<span class="tg anysel" style="left:547.87px;top:591.21px;line-height:15px"><span class="ti dj" style="width:21.71px;font-size:12.4px;line-height:15px;letter-spacing:0.000px;word-spacing:0px;transform:scaleX(1.7390);transform-origin:0 0;">--</span> <span class="ti dj" style="width:31.45px;font-size:12.8px;line-height:15px;letter-spacing:1.018px;word-spacing:1.15px;">Any</span> <span class="ti dj" style="font-size:12.4px;line-height:15px;letter-spacing:0.000px;word-spacing:0px;transform:scaleX(1.7390);transform-origin:0 0;">--</span></span>
<span class="tg anysel" style="left:689.87px;top:591.21px;line-height:15px"><span class="ti dj" style="width:21.71px;font-size:12.4px;line-height:15px;letter-spacing:0.000px;word-spacing:0px;transform:scaleX(1.7390);transform-origin:0 0;">--</span> <span class="ti dj" style="width:31.45px;font-size:12.8px;line-height:15px;letter-spacing:1.018px;word-spacing:1.15px;">Any</span> <span class="ti dj" style="font-size:12.4px;line-height:15px;letter-spacing:0.000px;word-spacing:0px;transform:scaleX(1.7390);transform-origin:0 0;">--</span></span>
<span class="tg anysel" style="left:1020.87px;top:591.21px;line-height:15px"><span class="ti dj" style="width:21.71px;font-size:12.4px;line-height:15px;letter-spacing:0.000px;word-spacing:0px;transform:scaleX(1.7390);transform-origin:0 0;">--</span> <span class="ti dj" style="width:31.45px;font-size:12.8px;line-height:15px;letter-spacing:1.018px;word-spacing:1.15px;">Any</span> <span class="ti dj" style="font-size:12.4px;line-height:15px;letter-spacing:0.000px;word-spacing:0px;transform:scaleX(1.7390);transform-origin:0 0;">--</span></span>
<span class="tg anysel" style="left:1151.85px;top:591.21px;line-height:15px"><span class="ti dj" style="width:21.65px;font-size:12.4px;line-height:15px;letter-spacing:0.000px;word-spacing:0px;transform:scaleX(1.7390);transform-origin:0 0;">--</span> <span class="ti dj" style="width:31.51px;font-size:12.8px;line-height:15px;letter-spacing:0.875px;word-spacing:1.15px;">Any</span> <span class="ti dj" style="font-size:12.4px;line-height:15px;letter-spacing:0.000px;word-spacing:0px;transform:scaleX(1.7390);transform-origin:0 0;">--</span></span>
<span class="tx" style="left:181.11px;top:588.30px;font-size:15px;line-height:18px;letter-spacing:0.894px;word-spacing:1.35px;color:#9a9a9a">Filter</span>
<span class="tx" style="left:1436.37px;top:584.80px;font-size:15px;line-height:18px;letter-spacing:0.000px;word-spacing:0px;transform:scaleX(0.8836);transform-origin:0 0;">TC</span>
<span class="tx" style="left:37.11px;top:625.80px;font-size:15px;line-height:18px;letter-spacing:0.338px;word-spacing:1.35px;transform:scaleX(1.0577);transform-origin:0 0;">Functional</span>
<a class="tx" href="#" style="left:194.73px;top:625.80px;font-size:15px;line-height:18px;letter-spacing:0.317px;word-spacing:1.35px;transform:scaleX(1.0659);transform-origin:0 0;color:#5a5a5a;text-decoration:underline;text-decoration-thickness:1px;text-underline-offset:2px;text-decoration-skip-ink:none;text-decoration-color:#6e6e6e">Ability to create new book</a>
<span class="tx" style="left:541.61px;top:625.80px;font-size:15px;line-height:18px;letter-spacing:0.271px;word-spacing:1.35px;transform:scaleX(1.0378);transform-origin:0 0;">Ready for Test</span>
<span class="tx" style="left:683.65px;top:625.80px;font-size:15px;line-height:18px;letter-spacing:0.228px;word-spacing:1.35px;transform:scaleX(1.0264);transform-origin:0 0;">Failed</span>
<span class="tx" style="left:859.88px;top:625.80px;font-size:15px;line-height:18px;letter-spacing:0.114px;word-spacing:1.35px;transform:scaleX(1.0174);transform-origin:0 0;">19-Feb-2019</span>
<span class="tx" style="left:1014.74px;top:625.80px;font-size:15px;line-height:18px;letter-spacing:0.290px;word-spacing:1.35px;transform:scaleX(1.0599);transform-origin:0 0;">1 - Critical</span>
<span class="tx" style="left:1145.51px;top:625.80px;font-size:15px;line-height:18px;letter-spacing:0.259px;word-spacing:1.35px;transform:scaleX(1.0511);transform-origin:0 0;">Library Information System (Sample)</span>
<span class="tx" style="left:1436.34px;top:625.80px;font-size:15px;line-height:18px;letter-spacing:0.000px;word-spacing:0px;transform:scaleX(0.9296);transform-origin:0 0;">TC2</span>
<span class="tx" style="left:37.11px;top:660.80px;font-size:15px;line-height:18px;letter-spacing:0.338px;word-spacing:1.35px;transform:scaleX(1.0577);transform-origin:0 0;">Functional</span>
<a class="tx" href="#" style="left:194.73px;top:660.80px;font-size:15px;line-height:18px;letter-spacing:0.361px;word-spacing:1.35px;transform:scaleX(1.0822);transform-origin:0 0;color:#5a5a5a;text-decoration:underline;text-decoration-thickness:1px;text-underline-offset:2px;text-decoration-skip-ink:none;text-decoration-color:#6e6e6e">Ability to edit existing book</a>
<span class="tx" style="left:541.61px;top:660.80px;font-size:15px;line-height:18px;letter-spacing:0.271px;word-spacing:1.35px;transform:scaleX(1.0378);transform-origin:0 0;">Ready for Test</span>
<span class="tx" style="left:683.65px;top:660.80px;font-size:15px;line-height:18px;letter-spacing:0.228px;word-spacing:1.35px;transform:scaleX(1.0264);transform-origin:0 0;">Failed</span>
<span class="tx" style="left:860.34px;top:660.80px;font-size:15px;line-height:18px;letter-spacing:0.244px;word-spacing:1.35px;transform:scaleX(1.0312);transform-origin:0 0;">26-Feb-2019</span>
<span class="tx" style="left:1014.74px;top:660.80px;font-size:15px;line-height:18px;letter-spacing:0.290px;word-spacing:1.35px;transform:scaleX(1.0599);transform-origin:0 0;">1 - Critical</span>
<span class="tx" style="left:1145.51px;top:660.80px;font-size:15px;line-height:18px;letter-spacing:0.259px;word-spacing:1.35px;transform:scaleX(1.0511);transform-origin:0 0;">Library Information System (Sample)</span>
<span class="tx" style="left:1436.34px;top:660.80px;font-size:15px;line-height:18px;letter-spacing:0.000px;word-spacing:0px;transform:scaleX(0.9212);transform-origin:0 0;">TC3</span>
<span class="tx" style="left:37.11px;top:695.80px;font-size:15px;line-height:18px;letter-spacing:0.338px;word-spacing:1.35px;transform:scaleX(1.0577);transform-origin:0 0;">Functional</span>
<a class="tx" href="#" style="left:194.73px;top:695.80px;font-size:15px;line-height:18px;letter-spacing:0.317px;word-spacing:1.35px;transform:scaleX(1.0736);transform-origin:0 0;color:#5a5a5a;text-decoration:underline;text-decoration-thickness:1px;text-underline-offset:2px;text-decoration-skip-ink:none;text-decoration-color:#6e6e6e">Ability to create new author</a>
<span class="tx" style="left:541.61px;top:695.80px;font-size:15px;line-height:18px;letter-spacing:0.271px;word-spacing:1.35px;transform:scaleX(1.0378);transform-origin:0 0;">Ready for Test</span>
<span class="tx" style="left:684.25px;top:695.80px;font-size:15px;line-height:18px;letter-spacing:0.441px;word-spacing:1.35px;transform:scaleX(1.0484);transform-origin:0 0;">Caution</span>
<span class="tx" style="left:859.88px;top:695.80px;font-size:15px;line-height:18px;letter-spacing:0.135px;word-spacing:1.35px;transform:scaleX(1.0221);transform-origin:0 0;">1-Mar-2019</span>
<span class="tx" style="left:1014.74px;top:695.80px;font-size:15px;line-height:18px;letter-spacing:0.290px;word-spacing:1.35px;transform:scaleX(1.0599);transform-origin:0 0;">1 - Critical</span>
<span class="tx" style="left:1145.51px;top:695.80px;font-size:15px;line-height:18px;letter-spacing:0.259px;word-spacing:1.35px;transform:scaleX(1.0511);transform-origin:0 0;">Library Information System (Sample)</span>
<span class="tx" style="left:1436.34px;top:695.80px;font-size:15px;line-height:18px;letter-spacing:0.000px;word-spacing:0px;transform:scaleX(0.9423);transform-origin:0 0;">TC4</span>
<span class="tx" style="left:37.11px;top:730.80px;font-size:15px;line-height:18px;letter-spacing:0.338px;word-spacing:1.35px;transform:scaleX(1.0577);transform-origin:0 0;">Functional</span>
<a class="tx" href="#" style="left:194.70px;top:730.80px;font-size:15px;line-height:18px;letter-spacing:0.352px;word-spacing:1.35px;transform:scaleX(1.0872);transform-origin:0 0;color:#5a5a5a;text-decoration:underline;text-decoration-thickness:1px;text-underline-offset:2px;text-decoration-skip-ink:none;text-decoration-color:#6e6e6e">Ability to edit existing author</a>
<span class="tx" style="left:541.61px;top:730.80px;font-size:15px;line-height:18px;letter-spacing:0.271px;word-spacing:1.35px;transform:scaleX(1.0378);transform-origin:0 0;">Ready for Test</span>
<span class="tx" style="left:683.61px;top:730.80px;font-size:15px;line-height:18px;letter-spacing:0.312px;word-spacing:1.35px;transform:scaleX(1.0378);transform-origin:0 0;">Not Run</span>
<span class="tx" style="left:1015.31px;top:730.80px;font-size:15px;line-height:18px;letter-spacing:0.453px;word-spacing:1.35px;transform:scaleX(1.0669);transform-origin:0 0;">2 - High</span>
<span class="tx" style="left:1145.51px;top:730.80px;font-size:15px;line-height:18px;letter-spacing:0.259px;word-spacing:1.35px;transform:scaleX(1.0511);transform-origin:0 0;">Library Information System (Sample)</span>
<span class="tx" style="left:1436.34px;top:730.80px;font-size:15px;line-height:18px;letter-spacing:0.000px;word-spacing:0px;transform:scaleX(0.9318);transform-origin:0 0;">TC5</span>
</section>
</body></html>
